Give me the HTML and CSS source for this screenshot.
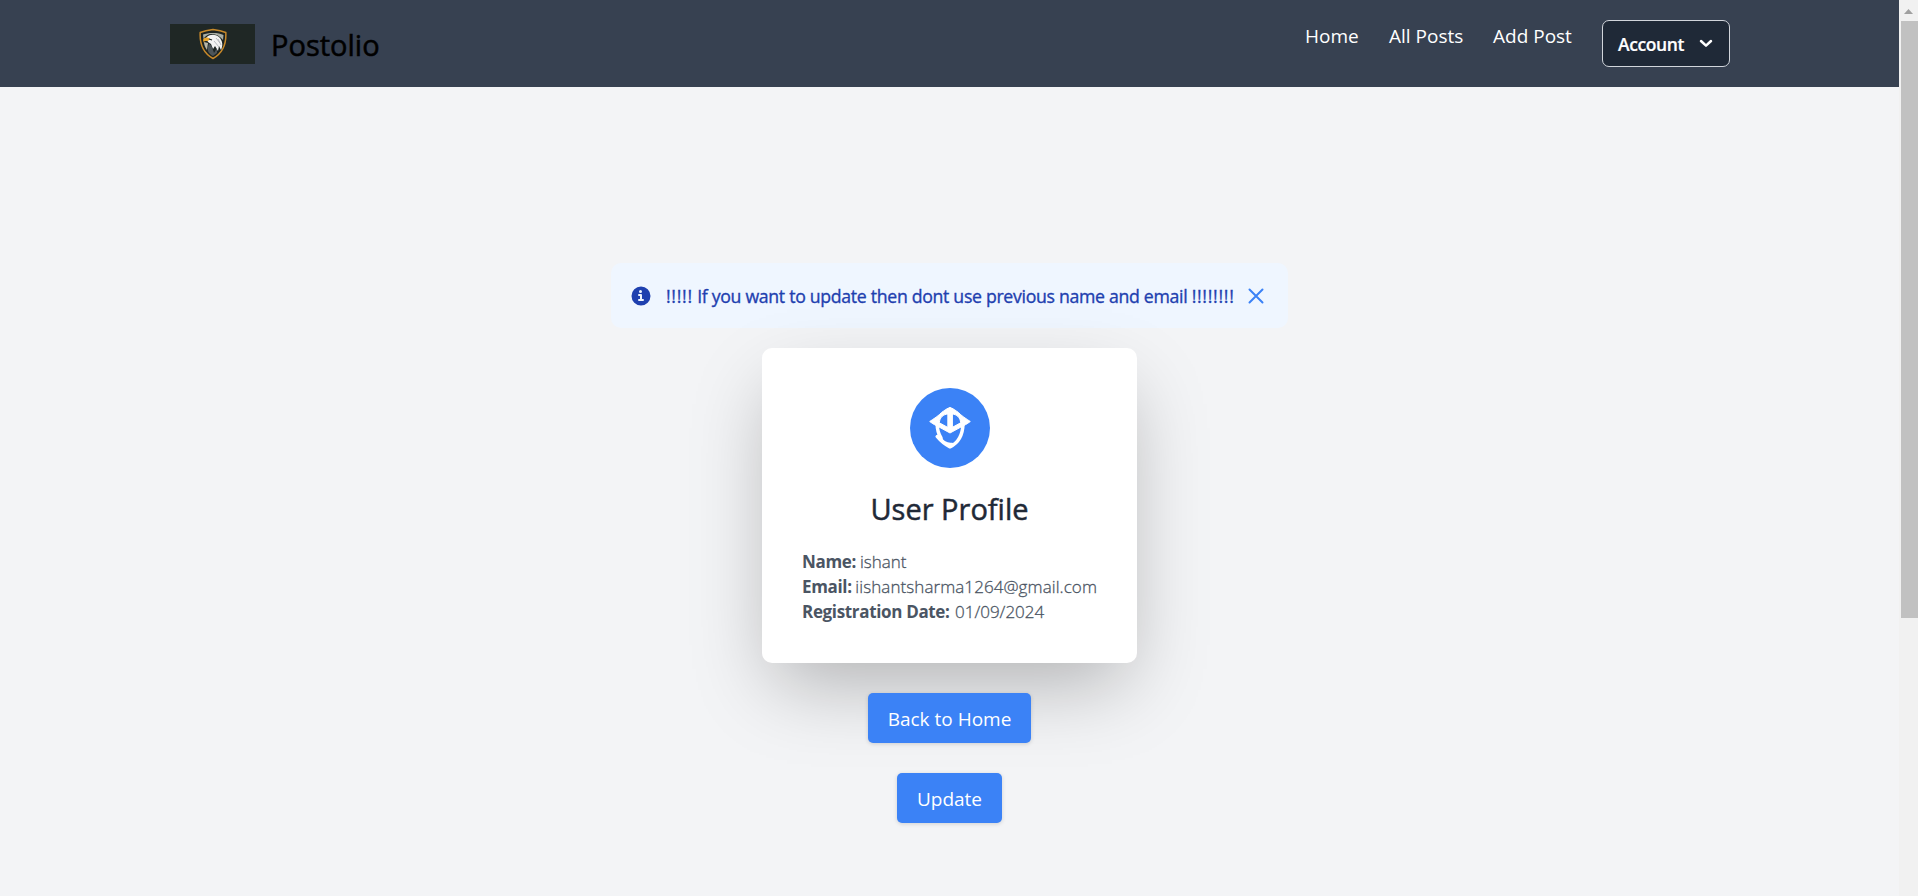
FILE: index.html
```html
<!DOCTYPE html>
<html lang="en">
<head>
<meta charset="utf-8">
<title>Postolio</title>
<link rel="stylesheet" href="styles.css">
</head>
<body>
<div class="page">
  <header class="navbar">
    <a class="brand">
      <span class="logo">
        <svg width="28" height="32" viewBox="0 0 28 32">
          <path d="M14 1.5C10 2 5 3 1.2 4.5C.5 17 4 25 14 30.5C24 25 27.500 17 26.800 4.500C23 3 18 2 14 1.500Z" fill="#1d2422" stroke="#c8892a" stroke-width="1.500"/>
          <path d="M4 6.500C8 4.500 20 4 24.500 7L24 12C21 8 17 6 13 6C9 6 6 8 4.500 11Z" fill="#aaaea4"/>
          <path d="M5 14L9 15L8 22C6 19 5 17 5 14Z" fill="#b9b8a9"/>
          <path d="M7 10C10 6 16 6 20 9C24 13 24 18 22 22L20 18L19 23L16 18L14 21L12 16L9 14Z" fill="#f2f2f2"/>
          <path d="M10 15L13 19L15 25L18 20L18 25L14 28C10 26 8 23 9 19Z" fill="#4d5559"/>
          <path d="M17 10L21 15M15 13L20 19M19 11L22 17" stroke="#a8adb3" stroke-width=".8"/>
          <path d="M4 12C5 9 9 9 11 11L9 13L5.500 13L5 15Z" fill="#e9a52b"/>
          <path d="M10 11L13 12" stroke="#1d2422" stroke-width="1.200"/>
        </svg>
      </span>
      <span class="brand-name">Postolio</span>
    </a>
    <nav class="links">
      <a class="link home">Home</a>
      <a class="link all">All Posts</a>
      <a class="link add">Add Post</a>
      <button class="account"><span class="account-label">Account</span>
        <svg class="chevron" width="14" height="9" viewBox="0 0 14 9"><path d="M2 2L7 6.600L12 2" fill="none" stroke="#fff" stroke-width="2.500" stroke-linecap="round" stroke-linejoin="round"/></svg>
      </button>
    </nav>
  </header>
  <main class="content">
    <div class="alert">
      <svg width="20" height="20" viewBox="0 0 20 20"><path fill="#1e40af" d="M10 .5a9.500 9.500 0 1 0 9.500 9.500A9.510 9.510 0 0 0 10 .5ZM9.500 4a1.500 1.500 0 1 1 0 3 1.500 1.500 0 0 1 0-3ZM12 15H8a1 1 0 0 1 0-2h1v-3H8a1 1 0 0 1 0-2h2a1 1 0 0 1 1 1v4h1a1 1 0 0 1 0 2Z"/></svg>
      <span class="alert-text"><span class="marks">!!!!!</span> If you want to update then dont use previous name and email <span class="marks">!!!!!!!!</span></span>
      <svg width="16" height="16" viewBox="0 0 16 16"><path d="M1.500 1.500L14.500 14.500M14.500 1.500L1.500 14.500" stroke="#3b82f6" stroke-width="2" stroke-linecap="round"/></svg>
    </div>
    <section class="card">
      <div class="avatar">
        <svg width="44" height="44" viewBox="0 0 44 44" fill="none" stroke="#fff" stroke-linejoin="round" stroke-linecap="round">
          <path fill="#fff" fill-rule="evenodd" stroke-width="1" d="M22 1.600C25 2.200 27.500 4.500 30.500 6.500C33 9.500 38.500 13 42.300 15.500C39 18 36 19.500 33 21L22 27L11 21C8 19.500 5 18 1.700 15.500C5.500 13 11 9.500 13.500 6.500C16.500 4.500 19 2.200 22 1.600ZM19.600 8C15 8.500 11.800 11.500 11.300 16.800L19.600 21.300ZM24.400 8V21.300L32.700 16.800C32.200 11.500 29 8.500 24.400 8Z"/>
          <path d="M9.200 18C9.200 24 10.500 28 13 32M35 18C34.700 29 31 36.500 22 40.800C17 38.500 12.500 34.500 9.200 30.500" stroke-width="3.500"/>
          <path d="M12.500 32C15 36.500 19 38.500 24 38" stroke-width="2.600"/>
        </svg>
      </div>
      <h1 class="title">User Profile</h1>
      <div class="details">
        <p class="row"><strong class="k-name">Name:</strong><span class="v-name">ishant</span></p>
        <p class="row"><strong class="k-email">Email:</strong><span class="v-email">iishantsharma1264@gmail.com</span></p>
        <p class="row"><strong class="k-date">Registration Date:</strong><span class="v-date">01/09/2024</span></p>
      </div>
    </section>
    <a class="button back">Back to Home</a>
    <a class="button update">Update</a>
  </main>
</div>
<div class="scrollbar">
  <svg class="arrow" width="9" height="5" viewBox="0 0 9 5"><path d="M0 5L4.500 0L9 5Z" fill="#a0a0a0"/></svg>
  <div class="thumb"></div>
</div>
</body>
</html>
```
FILE: styles.css
```css
* { box-sizing: border-box; }
body { margin: 0; height: 896px; overflow: hidden; display: flex; background: #f3f4f6; font-family: "Open Sans", "Noto Sans", sans-serif; }
.page { width: 1899px; height: 896px; }
.navbar { height: 87px; background: #374151; display: flex; justify-content: space-between; padding: 0 169px 0 170px; }
.brand { display: flex; align-items: flex-start; gap: 16px; padding-top: 24px; white-space: nowrap; }
.logo { width: 85px; height: 40px; background: #1f2725; display: flex; align-items: center; justify-content: center; }
.brand-name { font-size: 29px; font-weight: 500; line-height: 40px; margin-top: 1px; color: #000; -webkit-text-stroke: .5px #000; }
.links { display: flex; align-items: flex-start; padding-top: 20px; white-space: nowrap; }
.link { color: #fff; font-size: 19px; line-height: 28px; margin-top: 2px; }
.home { width: 84px; }
.all { width: 104px; }
.add { width: 109px; }
.account { width: 128px; height: 47px; border: 1px solid #d1d5db; border-radius: 7px; background: #1f2937; color: #fff; padding: 0 16px 0 15px; display: flex; align-items: center; justify-content: space-between; font-family: inherit; }
.account-label { font-size: 17.500px; font-weight: 600; line-height: 24px; letter-spacing: -.4px; -webkit-text-stroke: .2px #fff; margin-top: 1px; }
.chevron { margin-top: -1px; }
.content { display: flex; flex-direction: column; align-items: center; padding-top: 176px; }
.alert { width: 677px; height: 65px; flex: none; background: #eff6ff; border-radius: 10px; padding: 0 24px 0 20px; display: flex; align-items: center; white-space: nowrap; }
.alert-text { width: 582px; flex: none; margin-left: 15px; font-size: 17.700px; font-weight: 500; line-height: 28px; color: #1e40af; letter-spacing: -.31px; -webkit-text-stroke: .35px #1e40af; }
.marks { letter-spacing: .7px; }
.card { width: 375px; height: 315px; margin-top: 20px; background: #fff; border-radius: 10px; padding: 40px; box-shadow: 0 31px 75px -12px rgba(0,0,0,.28); display: flex; flex-direction: column; align-items: center; white-space: nowrap; }
.avatar { width: 80px; height: 80px; border-radius: 50%; background: #3b82f6; display: flex; align-items: center; justify-content: center; flex: none; }
.title { margin: 21px 0 0; font-size: 29px; font-weight: 500; line-height: 40px; color: #1f2937; -webkit-text-stroke: .5px #1f2937; }
.details { align-self: stretch; margin-top: 20px; color: #4b5563; font-size: 17px; font-weight: 300; -webkit-text-stroke: .3px #4b5563; }
.row { margin: 0; line-height: 25px; display: flex; }
.row strong { font-weight: 700; letter-spacing: -.34px; -webkit-text-stroke: 0; }
.k-name { width: 58px; }
.k-email { width: 54px; }
.k-date { width: 153px; }
.v-email { letter-spacing: .08px; }
.button { height: 50px; margin-top: 30px; background: #3b82f6; color: #fff; border-radius: 5px; font-size: 19px; line-height: 52px; text-align: center; white-space: nowrap; box-shadow: 0 1px 4px rgba(0,0,0,.15); z-index: 1; }
.back { width: 163px; }
.update { width: 105px; }
.scrollbar { width: 19px; height: 896px; background: #f1f1f1; display: flex; flex-direction: column; align-items: flex-end; }
.arrow { margin: 9px 5px 7px 0; }
.thumb { width: 17px; height: 597px; background: #c1c1c1; }
```
